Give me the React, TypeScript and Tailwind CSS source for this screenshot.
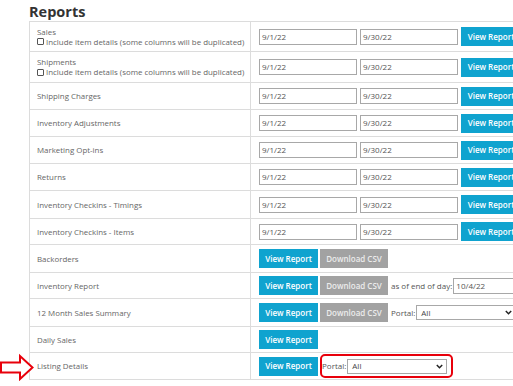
import React from "react";

const FONT = { fontFamily: '"Open Sans", "Liberation Sans", sans-serif' };

const BTN_BLUE =
  "flex h-[19px] shrink-0 items-center justify-center bg-[#0fa3cf] text-[8px] font-semibold text-white";
const BTN_GRAY =
  "flex h-[19px] w-[68px] shrink-0 items-center justify-center bg-[#a2a2a2] text-[8px] font-semibold text-[#ececec]";
const INPUT =
  "flex h-[16px] shrink-0 items-center border border-[#a8a8a8] bg-white pl-[2px] text-[8px] text-[#555]";

type Row = {
  label: string;
  checkbox?: boolean;
  h: number;
  kind: "dates" | "csv" | "csvDay" | "csvPortal" | "view" | "portal";
};

const ROWS: Row[] = [
  { label: "Sales", checkbox: true, h: 30, kind: "dates" },
  { label: "Shipments", checkbox: true, h: 31, kind: "dates" },
  { label: "Shipping Charges", h: 27, kind: "dates" },
  { label: "Inventory Adjustments", h: 27, kind: "dates" },
  { label: "Marketing Opt-ins", h: 27, kind: "dates" },
  { label: "Returns", h: 27, kind: "dates" },
  { label: "Inventory Checkins - Timings", h: 28, kind: "dates" },
  { label: "Inventory Checkins - Items", h: 26, kind: "dates" },
  { label: "Backorders", h: 28, kind: "csv" },
  { label: "Inventory Report", h: 26, kind: "csvDay" },
  { label: "12 Month Sales Summary", h: 28, kind: "csvPortal" },
  { label: "Daily Sales", h: 26, kind: "view" },
  { label: "Listing Details", h: 27, kind: "portal" },
];

function Chevron() {
  return (
    <svg width="7" height="5" viewBox="0 0 7 5" className="shrink-0">
      <path d="M0.8 1 L3.5 3.7 L6.2 1" fill="none" stroke="#222" strokeWidth="1.5" />
    </svg>
  );
}

function Select({ w }: { w: string }) {
  return (
    <div
      className={`flex h-[15px] shrink-0 items-center justify-between border border-[#a8a8a8] bg-white pl-[4px] pr-[3px] text-[8px] text-[#444] ${w}`}
    >
      <span>All</span>
      <Chevron />
    </div>
  );
}

function Actions({ kind }: { kind: Row["kind"] }) {
  if (kind === "dates") {
    return (
      <div className="flex items-center gap-[3px]">
        <div className={`${INPUT} w-[98px]`}>9/1/22</div>
        <div className={`${INPUT} w-[98px]`}>9/30/22</div>
        <div className={`${BTN_BLUE} w-[60px]`}>View Report</div>
      </div>
    );
  }
  const view = <div className={`${BTN_BLUE} w-[59px]`}>View Report</div>;
  if (kind === "view") return view;
  if (kind === "portal") {
    return (
      <div className="flex items-center gap-[2px]">
        {view}
        <div className="flex h-[24px] w-[133px] items-center rounded-[5px] border-2 border-[#e8000b]">
          <span className="mr-[1px] text-[8px] text-[#555]">Portal:</span>
          <Select w="w-[100px]" />
        </div>
      </div>
    );
  }
  return (
    <div className="flex items-center gap-[2px]">
      {view}
      <div className={BTN_GRAY}>Download CSV</div>
      {kind === "csvDay" && (
        <div className="ml-[1px] flex items-center">
          <span className="mr-[1px] text-[8px] text-[#555]">as of end of day:</span>
          <div className={`${INPUT} w-[80px]`}>10/4/22</div>
        </div>
      )}
      {kind === "csvPortal" && (
        <div className="ml-[1px] flex items-center">
          <span className="mr-[1px] text-[8px] text-[#555]">Portal:</span>
          <Select w="w-[100px]" />
        </div>
      )}
    </div>
  );
}

export default function App() {
  return (
    <div
      className="relative h-[386px] w-[513px] overflow-hidden bg-white"
      style={FONT}
    >
      <div className="h-[21px] pl-[29px] text-[14.5px] font-bold leading-[23px] text-[#333]">
        Reports
      </div>
      <div className="ml-[29px] w-[560px] border-l border-t border-[#dcdcdc]">
        {ROWS.map((r) => (
          <div
            key={r.label}
            className="flex border-b border-[#dcdcdc]"
            style={{ height: r.h }}
          >
            <div className="flex w-[221px] shrink-0 flex-col justify-center border-r border-[#dcdcdc] pl-[7px] text-[7.9px] leading-[10px] text-[#666]">
              <span>{r.label}</span>
              {r.checkbox && (
                <span className="flex items-center">
                  <span className="mr-[2px] inline-block h-[7px] w-[7px] shrink-0 rounded-[1px] border border-[#555]" />
                  Include item details (some columns will be duplicated)
                </span>
              )}
            </div>
            <div className="flex items-center pl-[8px]">
              <Actions kind={r.kind} />
            </div>
          </div>
        ))}
      </div>
      <svg
        className="absolute left-0 top-[353px]"
        width="34"
        height="28"
        viewBox="0 0 34 28"
      >
        <path
          d="M1 9.5 H20 V3 L32.5 14.5 L20 26 V19.5 H1 Z"
          fill="white"
          stroke="#e8000b"
          strokeWidth="2"
          strokeLinejoin="miter"
        />
      </svg>
    </div>
  );
}
